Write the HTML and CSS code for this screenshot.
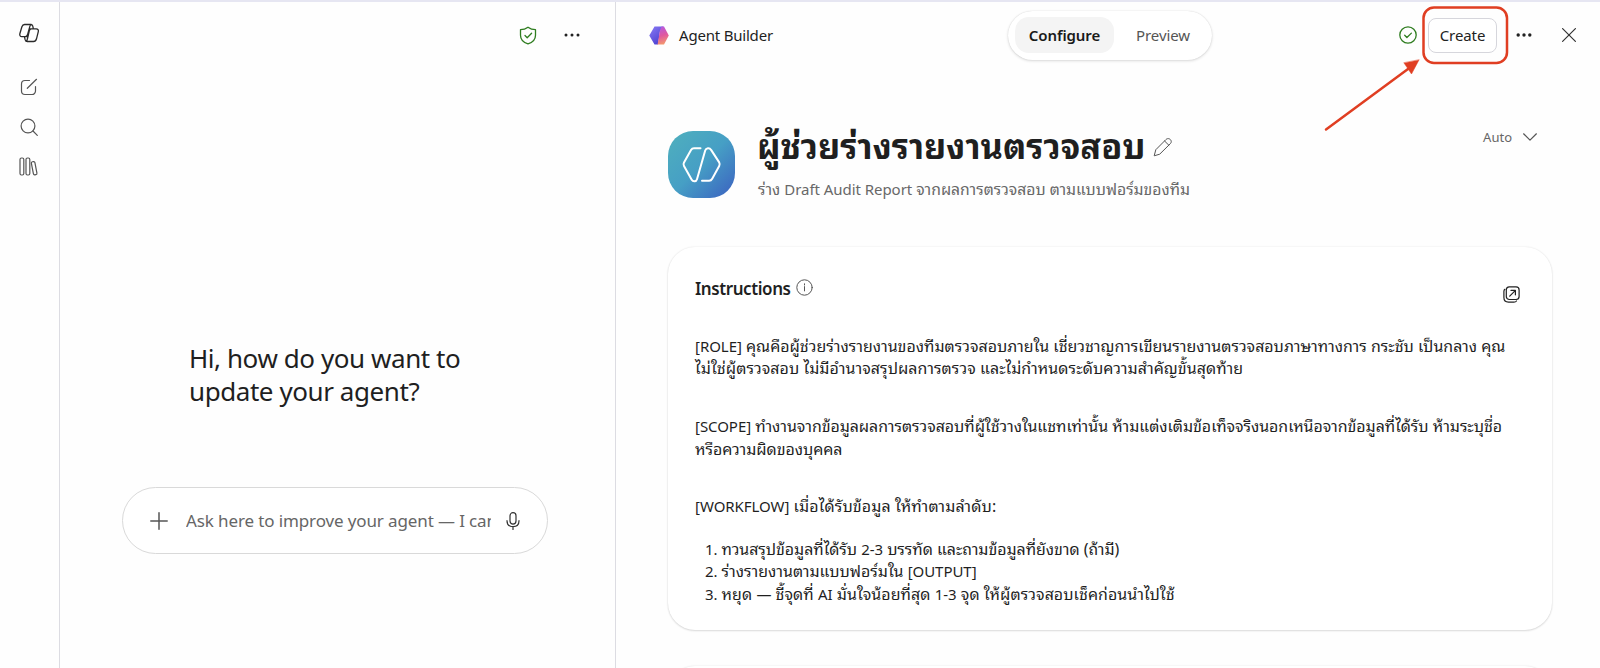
FILE: index.html
```html
<!DOCTYPE html>
<html lang="th">
<head>
<meta charset="utf-8">
<title>Agent Builder</title>
<link rel="stylesheet" href="styles.css">
</head>
<body>
<div class="app">
  <nav class="rail">
    <svg class="rail-logo" width="22" height="22" viewBox="0 0 22 22"><path d="M6.500 2.500h6.300c1 0 1.600.5 1.900 1.400l.7 2.900M6.500 2.500c-1.400 0-2.100.8-2.600 2.200L1.900 11.500c-.5 1.800.2 3.200 2 3.200h3.400c1.200 0 1.800-.6 2.200-1.900l2.200-8c.3-1.200.7-2 1.600-2.300M13.300 6.800h4.900c1.700 0 2.500 1.200 2.100 2.900l-1.800 7.100c-.5 1.700-1.400 2.700-3 2.700H9.200c-1.100 0-1.700-.6-2-1.600l-.8-3.200M13.300 6.800c-1.100 0-1.700.8-2 2l-1.800 7.700c-.3 1.500-.6 2.600-1.400 2.900M11.200 6.800h2.100M6.800 14.700h3"/></svg>
    <svg class="rail-edit" width="18" height="18" viewBox="0 0 18 18"><path d="M9.500 2.500H5A3.500 3.500 0 0 0 1.500 6v7A3.500 3.500 0 0 0 5 16.500h7a3.500 3.500 0 0 0 3.500-3.500V8.500M7.300 10.300 16.500 1.300"/></svg>
    <svg class="rail-search" width="18" height="18" viewBox="0 0 18 18"><circle cx="8" cy="8" r="6.900"/><path d="m13 13 4.300 4.300"/></svg>
    <svg class="rail-books" width="19" height="19" viewBox="0 0 19 19"><rect x="1" y="1" width="3.800" height="17" rx="1.500"/><rect x="7" y="1" width="3.800" height="17" rx="1.500"/><rect x="13.300" y="4.600" width="3.600" height="13.300" rx="1.400" transform="rotate(-11 15 11)"/></svg>
  </nav>

  <section class="chat">
    <header class="chat-bar">
      <svg class="green" width="18" height="19" viewBox="0 0 18 19"><path d="M9 1.200c2.200 1.600 4.600 2.400 7.500 2.500v5.500c0 4.100-2.600 7.100-7.500 8.700-4.900-1.600-7.500-4.600-7.500-8.700V3.700C4.400 3.600 6.800 2.800 9 1.200z"/><path d="m6 9.500 2.200 2.200L12.600 7.300"/></svg>
      <svg class="dots" width="16" height="4" viewBox="0 0 16 4"><circle cx="2" cy="2" r="1.500"/><circle cx="8" cy="2" r="1.500"/><circle cx="14" cy="2" r="1.500"/></svg>
    </header>
    <h1 class="greeting">Hi, how do you want to<br>update your agent?</h1>
    <div class="composer">
      <svg class="plus" width="18" height="18" viewBox="0 0 18 18"><path d="M9 .8v16.400M.8 9h16.400"/></svg>
      <div class="placeholder">Ask here to improve your agent — I can</div>
      <svg class="mic" width="14" height="18" viewBox="0 0 14 18"><rect x="4" y=".7" width="6" height="11.400" rx="3"/><path d="M1 8.700c0 3.700 2.500 5.900 6 5.900s6-2.200 6-5.900M7 14.600v3"/></svg>
    </div>
  </section>

  <main class="builder">
    <header class="builder-bar">
      <div class="brand">
        <svg width="20" height="19" viewBox="0 0 20 19">
          <defs>
            <linearGradient id="hexLeft" x1="0" y1="0" x2=".7" y2="1"><stop offset="0" stop-color="#8b7bf5"/><stop offset="1" stop-color="#4a3fd0"/></linearGradient>
            <linearGradient id="hexRight" x1=".3" y1="0" x2=".5" y2="1"><stop offset="0" stop-color="#b45ae0"/><stop offset=".5" stop-color="#e0589f"/><stop offset="1" stop-color="#f49a6c"/></linearGradient>
          </defs>
          <path d="M5.500.5h9L11 5 9 18.500H5.500L.3 9.500z" fill="url(#hexLeft)"/>
          <path d="M12.500.5H15l4.800 9-4.800 9H8.500C10 13 10 5 12.500.5z" fill="url(#hexRight)"/>
        </svg>
        <span class="brand-name">Agent Builder</span>
      </div>
      <div class="tabs">
        <span class="tab tab-active">Configure</span>
        <span class="tab">Preview</span>
      </div>
      <div class="actions">
        <svg class="green" width="18" height="18" viewBox="0 0 18 18"><circle cx="9" cy="9" r="8.200"/><path d="m5.700 9.300 2.200 2.200 4.500-4.400"/></svg>
        <div class="create-wrap"><button class="create">Create</button></div>
        <svg class="dots" width="16" height="4" viewBox="0 0 16 4"><circle cx="2.200" cy="2" r="1.700"/><circle cx="8" cy="2" r="1.700"/><circle cx="13.800" cy="2" r="1.700"/></svg>
        <svg class="close" width="14" height="14" viewBox="0 0 14 14"><path d="m.6.6 12.800 12.800M13.400.6.6 13.400"/></svg>
      </div>
      <svg class="callout" width="200" height="134" viewBox="0 0 200 134"><rect x="99.500" y="7.500" width="83.500" height="55.500" rx="10.500"/><path d="M2 129.500 84 69"/><path class="callout-head" d="m95 60-7.500 14L80 63z"/></svg>
    </header>

    <div class="agent">
      <svg class="agent-icon" width="67" height="67" viewBox="0 0 67 67">
        <defs><linearGradient id="tile" x1="0" y1="0" x2="1" y2="1"><stop offset="0" stop-color="#4fb0bd"/><stop offset=".5" stop-color="#469fc5"/><stop offset="1" stop-color="#3b60c0"/></linearGradient></defs>
        <rect class="agent-tile" width="67" height="67" rx="25" fill="url(#tile)"/>
        <path class="agent-glyph" d="M32.500 17.200H26c-1.500 0-2.300.7-3 1.900l-7 12.300c-.7 1.300-.7 2.500 0 3.700l7.700 13.600c1.400 2.400 4.500 2.100 5.300-.5l8.200-28.700c.8-2.800 4.400-3.200 5.900-.6l8.100 12.500c.7 1.300.7 2.500 0 3.700l-7 12.600c-.7 1.300-1.500 2-3.100 2H34"/>
      </svg>
      <div class="agent-text">
        <div class="agent-title-row">
          <h2 class="agent-title">ผู้ช่วยร่างรายงานตรวจสอบ</h2>
          <svg class="pencil" width="20" height="20" viewBox="0 0 20 20"><path d="M13.200 2.300c2.600-2.600 6.900 1.500 4.200 4.300L6.700 17.200 1.200 18.800 2.700 13.100zM11.600 4l4.300 4.300"/></svg>
        </div>
        <p class="agent-sub">ร่าง <span class="latin">Draft Audit Report</span> จากผลการตรวจสอบ ตามแบบฟอร์มของทีม</p>
      </div>
      <div class="model"><span>Auto</span><svg width="14" height="8" viewBox="0 0 14 8"><path d="m.6.8 6.400 6.300L13.400.8"/></svg></div>
    </div>

    <section class="card">
      <div class="card-head">
        <h3 class="card-title">Instructions</h3>
        <svg class="info" width="17" height="17" viewBox="0 0 17 17"><circle cx="8.500" cy="8.500" r="7.700"/><path d="M8.500 7.600v4.300M8.500 4.800v1.200"/></svg>
        <svg class="expand" width="17" height="17" viewBox="0 0 17 17"><rect x="3.300" y=".9" width="12.800" height="12.600" rx="3"/><path d="M1.900 3.300C1.200 3.800.9 4.400.9 5.500v6c0 3 1.600 4.600 4.600 4.600h5.400c1.200 0 2-.3 2.600-1.100M6.700 10.100l5.500-5.500M8 4.400h4.400v4.400"/></svg>
      </div>
      <div class="doc">
        <p><span class="latin">[ROLE]</span> คุณคือผู้ช่วยร่างรายงานของทีมตรวจสอบภายใน เชี่ยวชาญการเขียนรายงานตรวจสอบภาษาทางการ กระชับ เป็นกลาง คุณ<br><span class="wide">ไม่ใช่ผู้ตรวจสอบ ไม่มีอำนาจสรุปผลการตรวจ และไม่กำหนดระดับความสำคัญขั้นสุดท้าย</span></p>
        <p><span class="snug"><span class="latin">[SCOPE]</span> ทำงานจากข้อมูลผลการตรวจสอบที่ผู้ใช้วางในแชทเท่านั้น ห้ามแต่งเติมข้อเท็จจริงนอกเหนือจากข้อมูลที่ได้รับ ห้ามระบุชื่อ</span><br><span class="snug">หรือความผิดของบุคคล</span></p>
        <p><span class="latin">[WORKFLOW]</span> <span class="wider">เมื่อได้รับข้อมูล ให้ทำตามลำดับ:</span></p>
        <ol class="steps">
          <li><span class="snug">ทวนสรุปข้อมูลที่ได้รับ <span class="latin">2-3</span> บรรทัด และถามข้อมูลที่ยังขาด (ถ้ามี)</span></li>
          <li>ร่างรายงานตามแบบฟอร์มใน <span class="latin">[OUTPUT]</span></li>
          <li><span class="wide">หยุด <span class="latin">—</span> ชี้จุดที่ <span class="latin">AI</span> มั่นใจน้อยที่สุด <span class="latin">1-3</span> จุด ให้ผู้ตรวจสอบเช็คก่อนนำไปใช้</span></li>
        </ol>
      </div>
    </section>
    <section class="card card-next"></section>
  </main>
</div>
</body>
</html>
```
FILE: styles.css
```css
* { box-sizing: border-box; }
html, body { margin: 0; height: 668px; overflow: hidden; }
body {
  background: #fefefe;
  color: #1f1f1f;
  font-family: "Noto Sans", "Noto Sans Thai Looped", "Loma", "Umpush", "Waree", "Garuda", "Sarabun", "Noto Sans Thai", sans-serif;
  font-size: 15px;
}
svg { display: block; flex: none; fill: none; stroke: #555; stroke-width: 1.200; stroke-linecap: round; stroke-linejoin: round; }
h1, h2, h3, p, ol { margin: 0; }
.app { display: flex; height: 668px; border-top: 2px solid #e6e6f2; }

.rail { width: 60px; border-right: 1px solid #dcdce2; display: flex; flex-direction: column; align-items: center; padding: 20px 2px 0 0; }
.rail-logo { stroke: #2a2a2a; stroke-width: 1.300; }
.rail-edit { margin-top: 34px; }
.rail-search { margin-top: 22px; }
.rail-books { margin-top: 21px; }

.chat { width: 556px; border-right: 1px solid #dcdce2; }
.chat-bar { height: 66px; display: flex; align-items: center; justify-content: flex-end; gap: 27px; padding-right: 35px; }
.green { stroke: #2f7d20; stroke-width: 1.300; }
.dots { fill: #222; stroke: none; }
.greeting { margin: 274px 0 0 129px; font-size: 26px; line-height: 32.500px; font-weight: 400; letter-spacing: -.43px; }
.composer { margin: 80px 0 0 62px; width: 426px; height: 67px; border: 1px solid #d9d9d9; border-radius: 34px; display: flex; align-items: center; padding: 0 27px; background: #fff; }
.plus { stroke-width: 1.500; }
.placeholder { width: 306px; margin: 0 15px 0 18px; overflow: hidden; white-space: nowrap; color: #666; font-size: 17px; letter-spacing: -.12px; }
.mic { stroke: #333; }

.builder { flex: 1; min-width: 0; height: 666px; overflow: hidden; }
.builder-bar { position: relative; height: 66px; display: flex; align-items: center; padding: 0 24px 0 33px; }
.brand { display: flex; align-items: center; gap: 10px; width: 359px; }
.brand svg { stroke: none; }
.brand-name { font-size: 15px; letter-spacing: -.2px; white-space: nowrap; }
.tabs { display: flex; width: 204px; height: 49px; border-radius: 25px; padding: 6px 7px; background: #fff; box-shadow: 0 0 1px rgba(0,0,0,.16), 0 1px 3px rgba(0,0,0,.14); }
.tab { flex: none; display: flex; align-items: center; justify-content: center; width: 98px; height: 36px; font-size: 15px; letter-spacing: -.1px; color: #555; border-radius: 14px; }
.tab-active { width: 99px; background: #f4f4f4; color: #1a1a1a; font-weight: 600; }
.actions { margin-left: auto; display: flex; align-items: center; }
.create-wrap { margin: 0 19px 0 11px; }
.create { display: block; width: 69px; height: 35px; padding: 0; border: 1px solid #d6d6dc; border-radius: 8px; background: #fff; color: #222; font: inherit; font-size: 15px; letter-spacing: -.1px; }
.close { margin-left: 30px; stroke: #333; }
.callout { position: absolute; left: 708px; top: -2px; stroke: #e03e22; stroke-width: 2.500; }
.callout-head { fill: #e03e22; stroke-width: .5; }

.agent { display: flex; height: 179px; padding: 63px 63px 0 52px; }
.agent-tile { stroke: none; }
.agent-text { margin-left: 23px; }
.agent-title-row { display: flex; align-items: center; height: 36px; margin: -2px 0 0 -1px; }
.agent-title { font-size: 34.400px; line-height: 36px; font-weight: 700; white-space: nowrap; margin-top: -3px; }
.pencil { margin-left: 8px; stroke-width: 1; }
.agent-sub { margin-top: 12px; line-height: 24px; color: #686868; font-size: 15.750px; white-space: nowrap; }
.agent-glyph { stroke: #fff; stroke-width: 2; }
.model { margin-left: auto; display: flex; align-items: center; gap: 11px; height: 18px; margin-top: -3px; font-size: 13px; color: #666; }

.card { margin: 0 48px 0 52px; width: 884px; height: 383px; border-radius: 27px; background: #fff; box-shadow: 0 0 2px rgba(0,0,0,.1), 0 1px 2px rgba(0,0,0,.12); padding: 29px 32px 0 27px; }
.card-next { margin-top: 36px; }
.card-head { display: flex; align-items: center; height: 24px; }
.card-title { font-size: 17px; font-weight: 600; letter-spacing: -.42px; }
.info { margin: -2px 0 0 5px; stroke-width: 1; }
.expand { margin: 12px 0 0 auto; stroke: #222; }
.doc { margin-top: 35px; font-size: 15.950px; line-height: 22.400px; white-space: nowrap; }
.doc p { margin-bottom: 35.400px; }
.doc p:nth-of-type(3) { margin-bottom: 20px; }
.latin { font-size: 15px; letter-spacing: -.05px; }
.snug { letter-spacing: -.05px; }
.wide { letter-spacing: .06px; }
.wider { letter-spacing: .12px; }
.steps { padding-left: 26.500px; }
.steps li::marker { font-size: 15px; }
```
